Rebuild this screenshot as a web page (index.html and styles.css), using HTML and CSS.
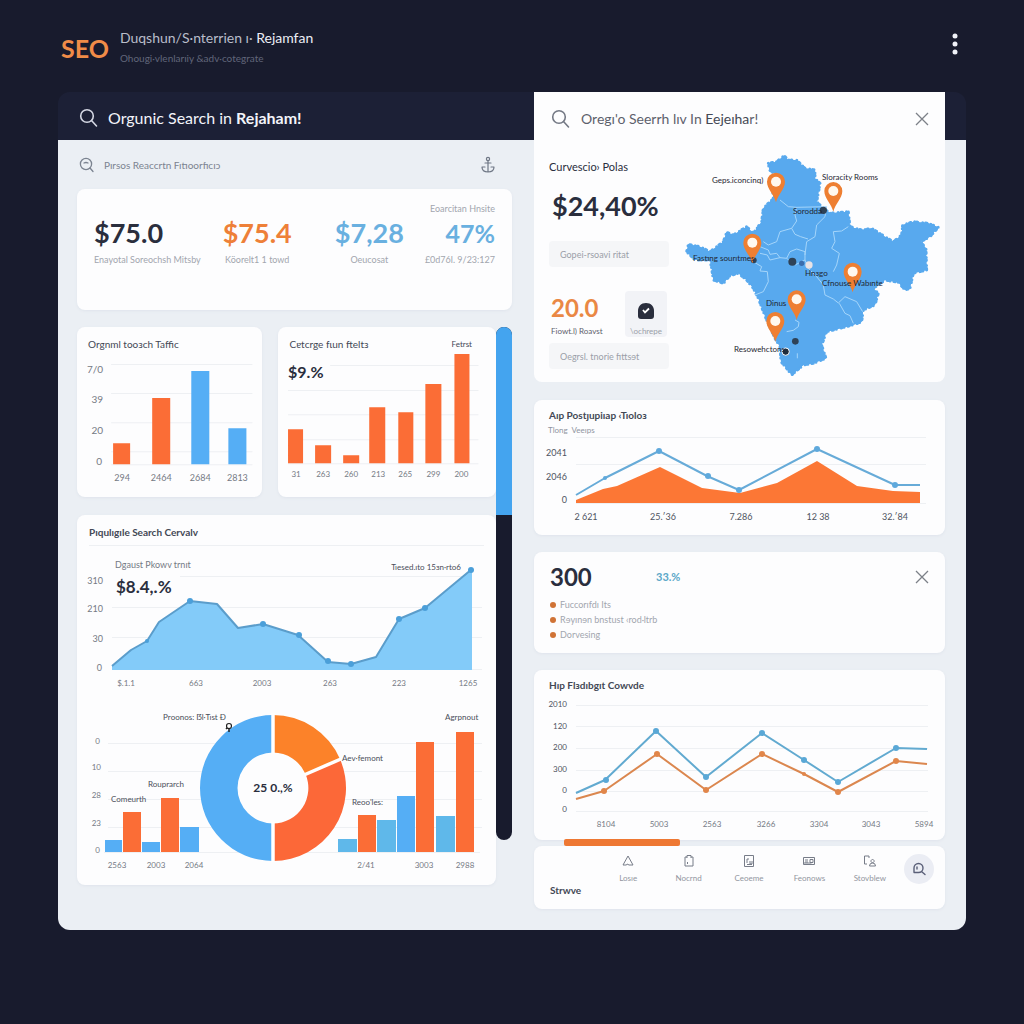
FILE: index.html
```html
<!DOCTYPE html>
<html lang="en">
<head>
<meta charset="utf-8">
<meta name="viewport" content="width=device-width, initial-scale=1">
<title>SEO Dashboard</title>
<link rel="stylesheet" href="styles.css">
</head>
<body>
<header class="topbar">
  <a class="logo" href="#">SEO</a>
  <div class="topbar-text">
    <p class="topbar-title">Duqshun/S·nterrien ı· <b>Rejamfan</b></p>
    <p class="topbar-sub">Ohougi·vlenlarıiy &amp;adv·cotegrate</p>
  </div>
  <button class="icon-btn menu-btn" aria-label="Menu">
    <svg width="8" height="24" viewBox="0 0 8 24" fill="#f0f2f8"><circle cx="4" cy="4" r="2.5"/><circle cx="4" cy="12" r="2.5"/><circle cx="4" cy="20" r="2.5"/></svg>
  </button>
</header>

<main class="panel">
  <section class="left">
    <div class="bar">
      <button class="icon-btn" aria-label="Search"><svg width="20" height="20" viewBox="0 0 20 20" fill="none" stroke="#d5d8e4" stroke-width="1.6" stroke-linecap="round"><circle cx="8" cy="8" r="6.3"/><path d="M12.5 12.5 17.5 18"/></svg></button>
      <h1>Orgunic Search in <b>Rejaham!</b></h1>
    </div>
    <div class="subbar">
      <svg width="16" height="16" viewBox="0 0 16 16" fill="none" stroke="#7b8390" stroke-width="1.3" stroke-linecap="round"><circle cx="7" cy="7" r="5.6"/><path d="M5 6q2-1 4 0M11 11l3 3.500"/></svg>
      <span>Pırsos Reaccrtn Fıtıoorfıcıɔ</span>
      <button class="icon-btn" aria-label="Anchor"><svg width="16" height="18" viewBox="0 0 16 18" fill="none" stroke="#6f7785" stroke-width="1.200" stroke-linecap="round"><circle cx="8" cy="3" r="1.600"/><path d="M8 5v11M5 7h6M2 11q0 5 6 5t6-5M2 11h3M11 11h3"/></svg></button>
    </div>

    <div class="card kpis">
      <div class="kpi first"><strong>$75.0</strong><span>Enayotal Soreochsh Mitsby</span></div>
      <div class="kpi orange"><strong>$75.4</strong><span>Köorelt1 1 towd</span></div>
      <div class="kpi blue"><strong>$7,28</strong><span>Oeucosat</span></div>
      <div class="kpi blue last"><em>Eoarcitan Hnsite</em><strong>47%</strong><span>£0d76l. 9/23:127</span></div>
    </div>

    <div class="scroll-area">
      <div class="stack">
        <div class="pair">
          <article class="card">
            <h2 class="card-title">Orgnml tooɜch Taffic</h2>
            <svg class="chart" viewBox="77 352 185 145" role="img" aria-label="Traffic by period">
              <path class="grid" d="M111 364.500h141M111 393.500h141M111 422.500h141M111 451.500h141M111 464.500h141"/>
              <g class="red"><path d="M113 443h17v21h-17zM152 398h18v66h-18z"/></g>
              <path class="sky" d="M191 371h18v93h-18zM228 428h18v36h-18z"/>
              <g class="tick t10 end"><text x="103" y="373">7/0</text><text x="103" y="403">39</text><text x="103" y="434">20</text><text x="102" y="465">0</text></g>
              <g class="tick t9 mid"><text x="122" y="481">294</text><text x="161" y="481">2464</text><text x="200" y="481">2684</text><text x="237" y="481">2813</text></g>
            </svg>
          </article>
          <article class="card">
            <h2 class="card-title">Cɐtcrge fɩun fteltɜ <small>Fetrst</small></h2>
            <svg class="chart" viewBox="278 352 217 145" role="img" aria-label="Conversion rates">
              <path class="grid" d="M330 365.500h148M288 390.500h190M288 414.500h190M288 439.500h190M288 463.500h190"/>
              <path class="red" d="M288 429h15v34h-15zM315 445h16v18h-16zM343 455h16v8h-16zM369 407h16v56h-16zM398 412h15v51h-15zM425 384h16v79h-16zM454 354h15v109h-15z"/>
              <text class="figure f16" x="288" y="378">$9.%</text>
              <g class="tick t8 mid"><text x="296" y="477">31</text><text x="323" y="477">263</text><text x="351" y="477">260</text><text x="378" y="477">213</text><text x="405" y="477">265</text><text x="433" y="477">299</text><text x="461" y="477">200</text></g>
            </svg>
          </article>
        </div>

        <article class="card">
          <h2 class="card-title ruled">Pıqulıgıle Seаrch Cervalv</h2>
          <svg class="chart" viewBox="77 545 419 340" role="img" aria-label="Search console overview">
            <path class="grid" d="M89 545.500h395M180 576.500h290M112 607.500h370M112 637.500h370M112 669.500h370"/>
            <path fill="#83cbf9" d="M112 666 131 650 147 641 159 622 190 601 217 604 238 628 263 624 298 635 328 662 351 664 376 657 399 619 425 608 472 569V670H112Z"/>
            <path class="line" stroke="#5b9dcb" d="M112 666 131 650 147 641 159 622 190 601 217 604 238 628 263 624 298 635 328 662 351 664 376 657 399 619 425 608 472 569"/>
            <g fill="#4b9fd9"><circle cx="147" cy="641" r="2"/><circle cx="190" cy="601" r="3"/><circle cx="263" cy="624" r="3"/><circle cx="299" cy="635" r="3"/><circle cx="328" cy="661" r="3"/><circle cx="351" cy="664" r="3"/><circle cx="399" cy="619" r="3"/><circle cx="425" cy="608" r="3"/><circle cx="471" cy="570" r="3"/></g>
            <g class="tick t9"><text x="115" y="568">Dgaust Pkowv trnıt</text></g>
            <text class="label end" x="461" y="570">Tıesed.ıto 15ɜn·rto6</text>
            <text class="figure f18" x="116" y="593">$8.4,.%</text>
            <g class="tick t9 end"><text x="103" y="584">310</text><text x="103" y="612">210</text><text x="103" y="642">30</text><text x="102" y="671">0</text></g>
            <g class="tick t8 mid"><text x="126" y="686">$.1.1</text><text x="196" y="686">663</text><text x="262" y="686">2003</text><text x="330" y="686">263</text><text x="399" y="686">223</text><text x="468" y="686">1265</text></g>

            <path class="grid" d="M108 743.500h374M108 771.500h374M108 799.500h374M108 827.500h374M104 852.500h376"/>
            <circle cx="273" cy="788" r="73" fill="#fdfdfe"/>
            <path class="sky" d="M105 840h17v12h-17zM142 842h18v10h-18zM180 827h19v25h-19zM397 796h18v56h-18z"/>
            <path fill="#5fb8ea" d="M338 839h19v13h-19zM377 820h19v32h-19zM436 816h19v36h-19z"/>
            <path class="red" d="M123 812h18v40h-18zM161 798h18v54h-18zM358 815h18v37h-18zM416 742h18v110h-18zM456 732h18v120h-18z"/>
            <path class="sky" d="M273 715A73 73 0 0 0 273 861V823.500A35.500 35.500 0 0 1 273 752.500Z"/>
            <path fill="#fc8229" d="M273 715A73 73 0 0 1 340 759L305.500 774A35.500 35.500 0 0 0 273 752.500Z"/>
            <path fill="#fc6838" d="M340 759A73 73 0 0 1 273 861V823.500A35.500 35.500 0 0 0 305.500 774Z"/>
            <path d="M273 713V754M273 822V862M304 775 342 758.500" stroke="#fff" stroke-width="3.500"/>
            <text class="figure f13 mid" x="273" y="792">25 0.,%</text>
            <g class="label"><text x="163" y="720">Prоonos: ẞl·Tıst Ɖ</text><text x="342" y="761">Aev·femont</text><text x="445" y="720">Agrpnout</text><text x="148" y="787">Rouprarch</text><text x="111" y="802">Comeurth</text><text x="352" y="805">Reoo'les:</text></g>
            <path d="M226 729l2-2M229 729v3" stroke="#222" stroke-width="1.500"/><circle cx="229" cy="726" r="2.500" fill="#fff" stroke="#222" stroke-width="1.200"/>
            <g class="tick t8 end"><text x="100" y="744">0</text><text x="101" y="770">10</text><text x="101" y="798">28</text><text x="101" y="826">23</text><text x="100" y="853">0</text></g>
            <g class="tick t8 mid"><text x="117" y="868">2563</text><text x="156" y="868">2003</text><text x="194" y="868">2064</text><text x="366" y="868">2/41</text><text x="424" y="868">3003</text><text x="465" y="868">2988</text></g>
          </svg>
        </article>
      </div>
      <div class="rail"><div class="rail-thumb"></div></div>
    </div>
  </section>

  <section class="right">
    <article class="card hero">
      <div class="hero-bar">
        <button class="icon-btn" aria-label="Search map"><svg width="20" height="20" viewBox="0 0 20 20" fill="none" stroke="#747985" stroke-width="1.600" stroke-linecap="round"><circle cx="8" cy="8" r="6.300"/><path d="M12.500 12.500 17.500 18"/></svg></button>
        <h2>Oregı'o Seerrh lıv In <b>Eejeıha</b>r!</h2>
        <button class="icon-btn" aria-label="Close map"><svg width="14" height="14" viewBox="0 0 14 14" stroke="#7c8088" stroke-width="1.300"><path d="M1 1 13 13M13 1 1 13"/></svg></button>
      </div>
      <div class="hero-body">
        <div class="facts">
          <h3>Curvescio› Polas</h3>
          <strong class="big">$24,40%</strong>
          <input class="field" aria-label="Metric" placeholder="Gopei-rsoavi ritat">
          <div class="fact-row">
            <div class="fact"><strong>20.0</strong><span>Fiowt.l) Roavst</span></div>
            <button class="tile"><svg width="18" height="18" viewBox="0 0 18 18"><path fill="#2a2e3d" d="M9 1C4 1 1 4.500 1 9v5q0 3 3 3h10q3 0 3-3V9C17 4.500 14 1 9 1Z"/><path d="M6 8 8 10.500 12 6.500" fill="none" stroke="#fff" stroke-width="1.800"/></svg><span>\ochrepe</span></button>
          </div>
          <input class="field" aria-label="Region" placeholder="Oegrsl. tnorie fıttsɘt">
        </div>
        <svg class="map" viewBox="680 146 262 232" role="img" aria-label="Map of regions">
          <defs><g id="pin"><path fill="#ee7f32" d="M0 2C-5-20-27-38-27-60A27 27 0 0 1 27-60C27-38 5-20 0 2Z"/><circle cy="-60" r="15" fill="#fff8ee"/></g></defs>
          <g transform="translate(680 145) scale(.3333)">
            <path id="land" fill="#58a9ee" d="M265 55 290 50 312 32 325 45 350 45 375 70 405 75 405 100 420 115 415 145 410 170 425 185 450 205 505 200 510 245 545 255 575 250 615 275 640 290 665 270 668 240 700 230 745 235 775 247 750 275 722 290 738 310 740 375 700 385 690 430 675 435 655 412 615 405 580 430 595 445 585 480 550 495 545 530 525 538 500 545 440 560 425 600 438 640 400 655 370 660 335 690 320 670 303 650 300 605 285 580 262 530 250 500 235 460 220 430 200 405 175 385 150 392 130 415 100 405 95 370 90 345 45 345 20 320 25 298 60 305 90 320 130 290 140 262 160 270 200 245 220 265 245 230 250 190 280 160 275 110 290 90 268 75Z"/>
            <use href="#land" class="coast"/>
            <path class="borders" d="M300 165 325 185 350 187 345 210 350 228 335 250 300 260 290 290 265 300 250 290M350 187 440 185 435 215 410 240 405 275 380 290 375 330M335 250 345 268 362 275 384 282M505 245 485 258 460 260 465 290 455 310 478 325 470 360 460 380M240 305 265 315 270 328 290 325 300 338 320 340 330 320 350 312 375 320 375 345 385 370 410 395 430 420 435 450 460 462 475 474 495 455 530 470 548 500M478 475 495 505 510 512 520 535M220 350 245 365 240 378 262 380 265 410 250 440 225 450M240 325 262 330 270 345 300 338M345 525 357 532 355 545 340 556 320 560M320 340 345 360 375 345M352 625V640"/>
            <g fill="#2e4257"><circle cx="430" cy="196" r="11"/><circle cx="221" cy="346" r="9"/><circle cx="337" cy="350" r="12"/><circle cx="346" cy="589" r="10"/></g>
            <circle cx="365" cy="355" r="8" fill="#3a6dad"/><circle cx="387" cy="360" r="11" fill="#e8e2e5"/>
            <circle cx="317" cy="620" r="11" fill="#1f2d3d" stroke="#fff" stroke-width="3"/>
            <use href="#pin" x="288" y="170"/><use href="#pin" x="460" y="198"/><use href="#pin" x="217" y="353"/><use href="#pin" x="518" y="440"/><use href="#pin" x="350" y="523"/><use href="#pin" x="286" y="588"/>
          </g>
          <g class="map-label"><text x="712" y="183">Geps.iconcinq)</text><text x="822" y="180">Sloracity Rooms</text><text x="793" y="214">Soroddə</text><text x="693" y="261">Fastıng sourıtmes</text><text x="805" y="276">Hnɜgo</text><text x="822" y="286">Cfnouse Wabınte</text><text x="766" y="306">Dinus</text><text x="734" y="352">Resowehctons</text></g>
        </svg>
      </div>
    </article>

    <article class="card">
      <h2 class="card-title tall">Aıp Postȷupiıap ‹Tıoloɜ</h2>
      <p class="card-sub">Tlong&nbsp; Veеıps</p>
      <svg class="chart" viewBox="534 436 411 99" role="img" aria-label="Positions over time">
        <path class="grid" d="M576 437.500h350M576 464.500h350M576 503.500h350"/>
        <path fill="#fc7735" d="M576 500 603 489 617 486 660 467 702 488 740 493 777 483 817 461 857 486 893 491 920 492V503H576Z"/>
        <path class="line" stroke="#67abd8" d="M576 495 605 478 659 451 707 476 739 490 817 449 895 485H920"/>
        <g fill="#5fa9dc"><circle cx="605" cy="478" r="2"/><circle cx="659" cy="451" r="3"/><circle cx="708" cy="476" r="3"/><circle cx="739" cy="490" r="3"/><circle cx="817" cy="449" r="3"/><circle cx="895" cy="485" r="3"/></g>
        <g class="tick dark t9 end"><text x="567" y="456">2041</text><text x="567" y="480">2046</text><text x="567" y="503">0</text></g>
        <g class="tick dark t9 mid"><text x="586" y="520">2 621</text><text x="663" y="520">25.′36</text><text x="741" y="520">7.286</text><text x="818" y="520">12 38</text><text x="895" y="520">32.′84</text></g>
      </svg>
    </article>

    <article class="card summary">
      <div class="summary-head"><strong>300</strong><span>33.%</span><button class="icon-btn" aria-label="Dismiss"><svg width="14" height="14" viewBox="0 0 14 14" stroke="#7c8088" stroke-width="1.300"><path d="M1 1 13 13M13 1 1 13"/></svg></button></div>
      <ul><li>Fuccorıfdı Its</li><li>Rɘyınɘn bnstust ‹rod·ltrb</li><li>Dorvesing</li></ul>
    </article>

    <article class="card">
      <h2 class="card-title tall">Hıp Flɜdıbgıt Cowvde</h2>
      <svg class="chart" viewBox="534 695 411 145" role="img" aria-label="Audit score trend">
        <path class="grid" d="M576 705.500h352M576 726.500h352M576 748.500h352M576 770.500h352M576 791.500h352M576 811.500h352"/>
        <path class="line" stroke="#62aad0" d="M576 793 605 780 656 731 706 777 762 733 804 760 838 782 896 748 927 749"/>
        <path class="line" stroke="#db874f" d="M576 799 604 791 657 754 706 790 762 754 804 774 838 792 896 761 927 764"/>
        <g fill="#5aa8d6"><circle cx="606" cy="780" r="3"/><circle cx="656" cy="731" r="3"/><circle cx="706" cy="777" r="3"/><circle cx="762" cy="733" r="3"/><circle cx="804" cy="760" r="3"/><circle cx="838" cy="782" r="3"/><circle cx="896" cy="748" r="3"/></g>
        <g fill="#e1864a"><circle cx="604" cy="791" r="3"/><circle cx="657" cy="754" r="3"/><circle cx="706" cy="790" r="3"/><circle cx="762" cy="754" r="3"/><circle cx="804" cy="774" r="2"/><circle cx="838" cy="792" r="3"/><circle cx="896" cy="761" r="3"/></g>
        <g class="tick dark t8 end"><text x="567" y="707">2010</text><text x="567" y="729">120</text><text x="567" y="750">200</text><text x="567" y="772">300</text><text x="567" y="793">0</text><text x="567" y="812">0</text></g>
        <g class="tick t8 mid"><text x="606" y="827">8104</text><text x="659" y="827">5003</text><text x="712" y="827">2563</text><text x="766" y="827">3266</text><text x="819" y="827">3304</text><text x="871" y="827">3043</text><text x="924" y="827">5894</text></g>
      </svg>
    </article>

    <nav class="card tabs">
      <span class="tabs-mark"></span>
      <span class="tabs-name">Strwve</span>
      <a href="#"><svg viewBox="0 0 14 14"><path d="M7 2 2 11H5.500M7 2 12 11H8M5.500 11q0-2 2.500 0"/></svg>Losıe</a>
      <a href="#"><svg viewBox="0 0 14 14"><path d="M5 3H3v9h8V3H9M5 4V1.500h4V4M5.500 8v2"/></svg>Nocrnd</a>
      <a href="#"><svg viewBox="0 0 14 14"><path d="M2.500 1.500h9v11h-9zM5 5h2M5 5v4M8 7v3h2V7M5 10.500h5"/></svg>Ceoeme</a>
      <a href="#"><svg viewBox="0 0 14 14"><path d="M1.500 3.500h11v7h-11zM3 6h3M3 8h3M8 5.500h3v3H8zM1.500 9h8"/></svg>Feonows</a>
      <a href="#"><svg viewBox="0 0 14 14"><path d="M6 2H1.500v8H4M6 2v2M6.500 12q0-3 3-3t3 3zM9.500 5.500a1.600 1.600 0 1 0 .1 0"/></svg>Stovblew</a>
      <button class="round" aria-label="Find"><svg width="16" height="16" viewBox="0 0 16 16" fill="none" stroke="#5a5f78" stroke-width="1.400" stroke-linecap="round"><path d="M3 11V7a4.500 4.500 0 1 1 4.500 4.500H3M10.500 10.500 14 13.500M6 6v2"/></svg></button>
    </nav>
  </section>
</main>
</body>
</html>
```

FILE: styles.css
```css
* { box-sizing: border-box; }
body {
  margin: 0;
  min-height: 100vh;
  background: #181b2d;
  color: #2a2e3d;
  font-family: Lato, "Noto Sans", sans-serif;
  font-size: 10px;
  line-height: 12px;
}
h1, h2, h3, p, ul { margin: 0; padding: 0; font-weight: 400; }
svg { display: block; }
button { font: inherit; border: 0; padding: 0; background: none; cursor: pointer; }
.icon-btn { display: flex; align-items: center; justify-content: center; }

.topbar { display: flex; align-items: center; padding: 28px 65px 24px 61px; height: 92px; }
.logo { color: #f08c48; font-size: 25px; line-height: 28px; font-weight: 700; text-decoration: none; margin-right: 11px; }
.topbar-text { flex: 1; }
.topbar-title { color: #b9bdca; font-size: 14px; line-height: 20px; }
.topbar-title b { color: #eceef5; font-weight: 400; }
.topbar-sub { color: #61667a; line-height: 20px; }
.menu-btn { margin-bottom: 8px; }

.panel {
  display: grid;
  grid-template-columns: 476fr 432fr;
  margin: 0 58px 94px;
  border-radius: 12px;
  background: linear-gradient(#1c2036 48px, #ebeff4 48px);
}
.left { padding: 0 22px 45px 19px; }
.right { padding: 0 21px 21px 0; display: flex; flex-direction: column; gap: 17px; }
.card { background: #fdfdfe; border-radius: 8px; box-shadow: 0 1px 3px #dfe4ec; overflow: hidden; }

.bar { display: flex; align-items: center; gap: 9px; height: 52px; padding-left: 2px; color: #f3f4fa; }
.bar h1 { font-size: 16px; line-height: 20px; }
.subbar { display: flex; align-items: center; gap: 9px; height: 45px; padding: 0 16px 4px 2px; color: #7b8390; }
.subbar span { flex: 1; }

.kpis { display: grid; grid-template-columns: 106fr 114fr 112fr 68fr; padding: 14px 17px 41px; align-items: end; }
.kpi { display: flex; flex-direction: column; align-items: center; white-space: nowrap; color: #a2a6ae; font-size: 9px; }
.kpi strong { font-size: 27px; line-height: 36px; color: #2a2e3d; }
.kpi span { line-height: 18px; }
.kpi.first { align-items: flex-start; }
.kpi.last { align-items: flex-end; }
.kpi em { font-style: normal; line-height: 12px; }
.kpi.orange strong { color: #ee8038; }
.kpi.blue strong { color: #69b0e0; }
.kpi.last strong { font-size: 25px; }

.scroll-area { display: flex; align-items: flex-start; margin-top: 17px; }
.stack { flex: 1; display: flex; flex-direction: column; gap: 18px; min-width: 0; }
.pair { display: grid; grid-template-columns: 185fr 217fr; gap: 16px; }
.rail { width: 16px; height: 513px; border-radius: 8px; background: #181b2d; overflow: hidden; }
.rail-thumb { height: 188px; background: #44a4ef; }

.card-title { display: flex; justify-content: space-between; font-size: 10px; line-height: 12px; color: #434855; padding: 11px 24px 2px 12px; font-weight: 700; }
.card-title small { font-size: 8px; }
.pair .card-title { font-weight: 400; padding-left: 11px; }
.card-title.ruled { padding-bottom: 7px; }
.card-title.tall { padding: 9px 15px 4px; }
.card-sub { padding: 0 14px; color: #8f949e; font-size: 8px; line-height: 11px; }
.chart { width: 100%; height: auto; }
.grid { stroke: #eef0f3; fill: none; }
.red { fill: #fb6d36; }
.sky { fill: #55aef5; }
.line { fill: none; stroke-width: 2; stroke-linejoin: round; }
.tick { fill: #757a84; }
.tick.dark { fill: #4f5461; }
.t8 { font-size: 8px; }
.t9 { font-size: 9px; }
.t10 { font-size: 10px; }
.mid { text-anchor: middle; }
.end { text-anchor: end; }
.label { font-size: 8px; fill: #4a4e59; }
.figure { font-weight: 700; fill: #2a2e3d; }
.f13 { font-size: 12px; }
.f16 { font-size: 16px; }
.f18 { font-size: 17px; }

.hero { border-radius: 0 0 8px 8px; margin-bottom: 1px; box-shadow: none; }
.hero-bar { display: flex; align-items: center; gap: 10px; height: 54px; padding: 0 16px 0 17px; }
.hero-bar h2 { flex: 1; font-size: 14px; line-height: 20px; color: #5d616c; }
.hero-bar b { font-weight: 400; color: #454955; }
.hero-body { display: flex; gap: 11px; padding: 0 3px 4px 15px; }
.facts { width: 120px; padding-top: 14px; }
.facts h3 { font-size: 11px; line-height: 14px; }
.big { display: block; font-size: 27px; line-height: 32px; margin: 16px 0 19px 3px; }
.field { display: block; width: 100%; height: 26px; border: 0; border-radius: 4px; background: #f5f6f8; padding: 0 11px; font: inherit; font-size: 9px; }
.field::placeholder { color: #9b9fa8; opacity: 1; }
.fact-row { display: flex; justify-content: space-between; margin: 24px 2px 6px; }
.fact { display: flex; flex-direction: column; font-size: 8px; color: #5d616c; }
.fact strong { font-size: 24px; line-height: 34px; color: #ea8844; }
.tile { width: 42px; height: 46px; border-radius: 4px; background: #f2f3f7; display: flex; flex-direction: column; align-items: center; justify-content: flex-end; gap: 5px; font-size: 8px; color: #9b9fa8; }
.map { flex: 1; min-width: 0; height: auto; }
.coast { stroke: #58a9ee; stroke-width: 9; stroke-linecap: round; stroke-dasharray: 0 9 4 12 0 7 2 15; }
.borders { fill: none; stroke: #a5d5fa; stroke-width: 3; stroke-linejoin: round; }
.map-label { font-size: 8px; fill: #1f2632; }

.summary { padding: 9px 16px 11px; }
.summary-head { display: flex; align-items: center; height: 32px; }
.summary-head strong { font-size: 24px; width: 106px; }
.summary-head span { flex: 1; font-size: 11px; font-weight: 700; color: #5aa7c8; }
.summary ul { list-style: none; padding-top: 4px; }
.summary li { display: flex; align-items: center; gap: 4px; font-size: 9px; line-height: 15px; color: #a2a6ae; }
.summary li::before { content: ""; width: 6px; height: 6px; border-radius: 3px; background: #d07336; }

.tabs { position: relative; overflow: visible; display: flex; align-items: flex-start; margin-top: -11px; padding: 8px 11px 7px 16px; height: 63px; }
.tabs-mark { position: absolute; left: 30px; top: -7px; width: 116px; height: 7px; border-radius: 2px; background: #ee7833; }
.tabs-name { width: 48px; align-self: flex-end; font-size: 10px; line-height: 24px; font-weight: 700; color: #434855; }
.tabs a { flex: 1; display: flex; flex-direction: column; align-items: center; gap: 4px; font-size: 8px; color: #9296a0; text-decoration: none; }
.tabs a svg { width: 14px; height: 14px; fill: none; stroke: #777c88; }
.round { width: 30px; height: 30px; border-radius: 50%; background: #ebedf4; display: flex; align-items: center; justify-content: center; margin-left: 4px; }
```
